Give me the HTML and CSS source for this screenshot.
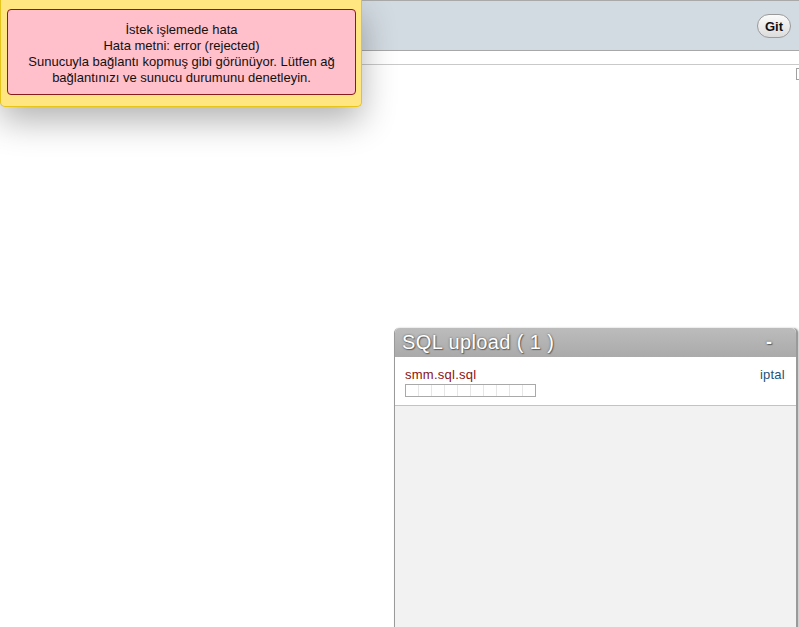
FILE: index.html
```html
<!DOCTYPE html>
<html lang="tr">
<head>
<meta charset="utf-8">
<title>SQL upload</title>
<link rel="stylesheet" href="styles.css">
</head>
<body>
<div class="page">
  <div class="topbar">
    <button class="git-btn">Git</button>
  </div>
  <div class="subbar"></div>
  <div class="content">
    <span class="broken-img"></span>
  </div>
</div>

<div class="toast">
  <div class="toast-msg">
    İstek işlemede hata<br>
    Hata metni: error (rejected)<br>
    Sunucuyla bağlantı kopmuş gibi görünüyor. Lütfen ağ<br>
    bağlantınızı ve sunucu durumunu denetleyin.
  </div>
</div>

<div class="upload">
  <div class="upload-head">
    <span class="upload-title">SQL upload ( 1 )</span>
    <span class="upload-min">-</span>
  </div>
  <div class="upload-item">
    <div class="item-row">
      <span class="file-name">smm.sql.sql</span>
      <a class="cancel" href="#">iptal</a>
    </div>
    <div class="progress">
      <span></span><span></span><span></span><span></span><span></span>
      <span></span><span></span><span></span><span></span><span></span>
    </div>
  </div>
  <div class="upload-rest"></div>
</div>
</body>
</html>
```
FILE: styles.css
```css
html, body {
  margin: 0;
  padding: 0;
  background: #fff;
  font-family: "Liberation Sans", Arial, sans-serif;
  overflow: hidden;
}

.page {
  width: 799px;
  height: 627px;
}

.topbar {
  height: 49px;
  border-top: 1px solid #a9a9a9;
  border-bottom: 1px solid #a8a8a8;
  background: #d3dbe2;
  display: flex;
  justify-content: flex-end;
  align-items: center;
  padding-right: 8px;
}

.git-btn {
  width: 34px;
  height: 24px;
  margin-top: 1px;
  border: 1px solid #9a9a9a;
  border-radius: 12px;
  background: linear-gradient(#fbfbfb, #dcdcdc);
  font-family: "Liberation Sans", Arial, sans-serif;
  font-weight: bold;
  font-size: 13px;
  color: #111;
  padding: 0;
}

.subbar {
  height: 13px;
  border-bottom: 1px solid #c9c9c9;
}

.content {
  display: flex;
  justify-content: flex-end;
  padding-top: 3px;
}

.broken-img {
  width: 10px;
  height: 12px;
  margin-right: -7px;
  border: 1px solid #a0a0a0;
  background: linear-gradient(#2a5fa8, #2a5fa8) 2px 2px / 2px 2px no-repeat, #fff;
  box-sizing: border-box;
}

.toast {
  position: absolute;
  left: 0;
  top: 0;
  width: 362px;
  height: 107px;
  box-sizing: border-box;
  background: #ffe680;
  border: 1px solid #e6c419;
  border-top: none;
  border-radius: 0 0 5px 5px;
  box-shadow: 0 14px 34px rgba(0, 0, 0, 0.3);
  padding: 9px 5px 0 6px;
}

.toast-msg {
  height: 86px;
  box-sizing: border-box;
  background: #ffc0cb;
  border: 1px solid #8b1a1a;
  border-radius: 4px;
  text-align: center;
  font-size: 13px;
  line-height: 16px;
  color: #111;
  padding-top: 12px;
}

.upload {
  position: absolute;
  left: 394px;
  top: 328px;
  width: 404px;
  height: 320px;
  box-sizing: border-box;
  border-left: 1px solid #9a9a9a;
  border-right: 2px solid #9a9a9a;
  border-radius: 5px 5px 0 0;
  background: #f2f2f2;
  display: flex;
  flex-direction: column;
  box-shadow: 1px 0 2px rgba(0, 0, 0, 0.25);
}

.upload-head {
  height: 29px;
  background: linear-gradient(#bcbcbc, #aaaaaa);
  border-radius: 5px 5px 0 0;
  display: flex;
  justify-content: space-between;
  align-items: center;
  padding: 0 24px 0 7px;
  color: #fff;
  text-shadow: 0 0 2px #555, 1px 1px 1px #666;
  flex-shrink: 0;
}

.upload-title {
  font-size: 20px;
  letter-spacing: 0.4px;
}

.upload-min {
  font-size: 18px;
  font-weight: bold;
}

.upload-item {
  background: #fff;
  border-bottom: 1px solid #c3c3c3;
  padding: 10px 11px 8px 10px;
  flex-shrink: 0;
}

.item-row {
  display: flex;
  justify-content: space-between;
  font-size: 13px;
  line-height: 15px;
  letter-spacing: 0.25px;
}

.file-name {
  color: #8b1111;
}

.cancel {
  color: #1d5378;
  text-decoration: none;
}

.progress {
  margin-top: 2px;
  width: 131px;
  height: 13px;
  box-sizing: border-box;
  border: 1px solid #a9a9a9;
  display: flex;
}

.progress span {
  flex: 1;
  border-right: 1px solid #e6e6e6;
}

.progress span:last-child {
  border-right: none;
}

.upload-rest {
  flex: 1;
}
```
